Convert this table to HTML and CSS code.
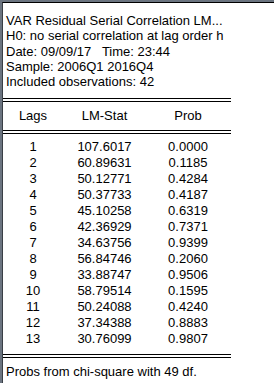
FILE: index.html
```html
<!DOCTYPE html>
<html>
<head>
<meta charset="utf-8">
<link rel="stylesheet" href="styles.css">
</head>
<body>
<div class="win">
  <div class="pane">
    <div class="info">
      <div>VAR Residual Serial Correlation LM...</div>
      <div>H0: no serial correlation at lag order h</div>
      <div>Date: 09/09/17&nbsp;&nbsp; Time: 23:44</div>
      <div>Sample: 2006Q1 2016Q4</div>
      <div>Included observations: 42</div>
    </div>
    <div class="dbl"></div>
    <div class="row head"><span>Lags</span><span>LM-Stat</span><span>Prob</span></div>
    <div class="dbl"></div>
    <div class="data">
      <div class="row"><span>1</span><span>107.6017</span><span>0.0000</span></div>
      <div class="row"><span>2</span><span>60.89631</span><span>0.1185</span></div>
      <div class="row"><span>3</span><span>50.12771</span><span>0.4284</span></div>
      <div class="row"><span>4</span><span>50.37733</span><span>0.4187</span></div>
      <div class="row"><span>5</span><span>45.10258</span><span>0.6319</span></div>
      <div class="row"><span>6</span><span>42.36929</span><span>0.7371</span></div>
      <div class="row"><span>7</span><span>34.63756</span><span>0.9399</span></div>
      <div class="row"><span>8</span><span>56.84746</span><span>0.2060</span></div>
      <div class="row"><span>9</span><span>33.88747</span><span>0.9506</span></div>
      <div class="row"><span>10</span><span>58.79514</span><span>0.1595</span></div>
      <div class="row"><span>11</span><span>50.24088</span><span>0.4240</span></div>
      <div class="row"><span>12</span><span>37.34388</span><span>0.8883</span></div>
      <div class="row"><span>13</span><span>30.76099</span><span>0.9807</span></div>
    </div>
    <div class="dbl"></div>
    <div class="foot">Probs from chi-square with 49 df.</div>
  </div>
</div>
</body>
</html>
```

FILE: styles.css
```css
html, body {
  margin: 0;
  padding: 0;
  background: #ffffff;
}
body {
  font-family: "Liberation Sans", Arial, sans-serif;
  font-size: 13px;
  color: #000000;
  width: 274px;
  height: 385px;
  overflow: hidden;
}
.win {
  border-top: 2px solid #6b7480;
  border-left: 2px solid #6b7480;
  height: 383px;
  box-sizing: border-box;
}
.pane {
  border-top: 1px solid #000000;
  border-left: 1px solid #3a3f46;
  height: 381px;
  box-sizing: border-box;
}
.info {
  box-sizing: border-box;
  height: 95px;
  padding: 10px 0 0 3px;
  line-height: 15.25px;
  white-space: nowrap;
}
.dbl {
  width: 228px;
  height: 2px;
  border-top: 1px solid #000000;
  border-bottom: 1px solid #000000;
}
.row {
  display: grid;
  grid-template-columns: 60px 83px 84px;
  height: 16px;
  line-height: 16px;
}
.row span {
  text-align: center;
}
.head {
  height: 28px;
  line-height: 28px;
}
.data {
  padding: 5px 0 7px;
}
.foot {
  padding: 6px 0 0 3px;
  line-height: 16px;
  white-space: nowrap;
}
```
